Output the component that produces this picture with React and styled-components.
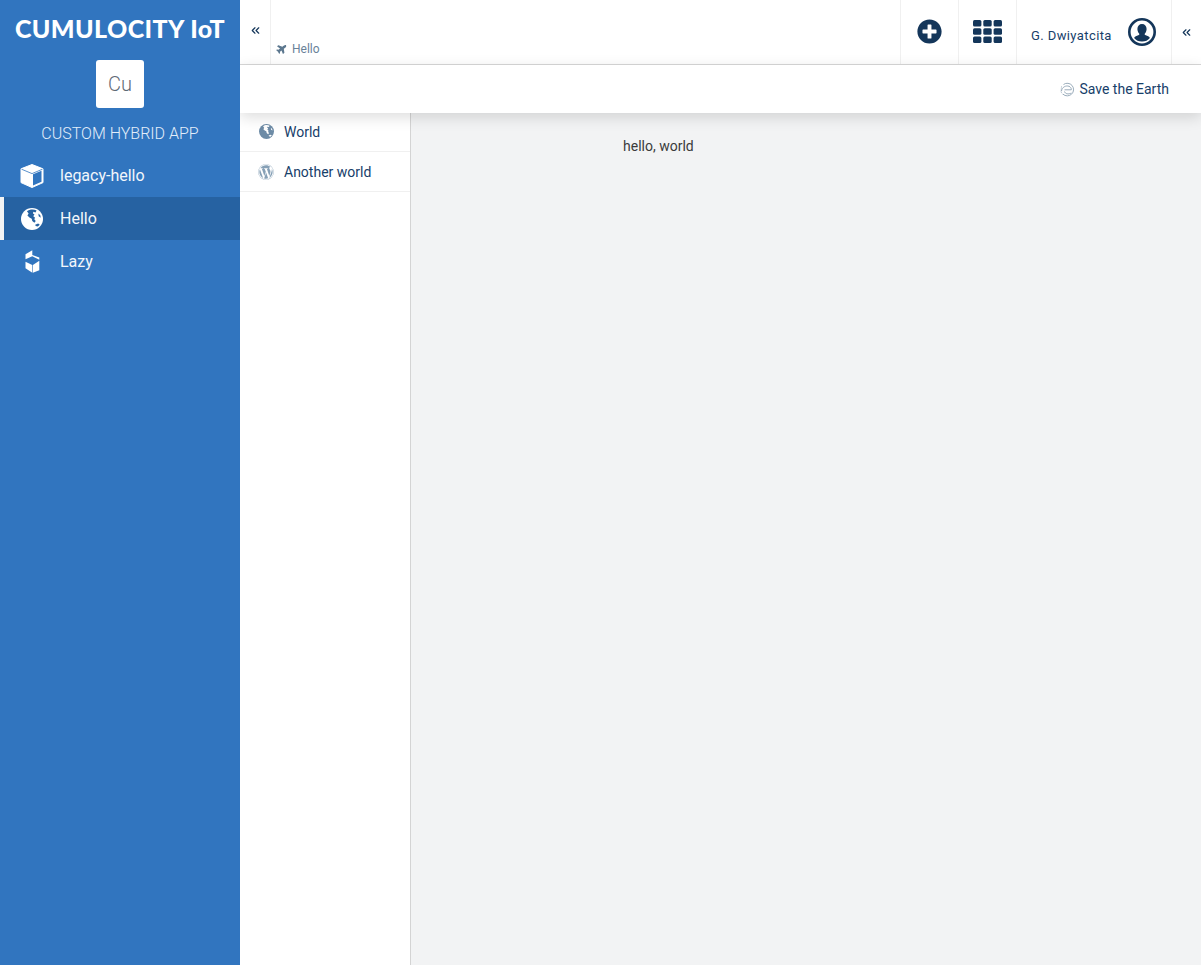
import React from 'react';
import styled, { createGlobalStyle } from 'styled-components';
import { FaWordpress, FaPlane, FaPlusCircle } from 'react-icons/fa';
import { ChevronsLeft } from 'lucide-react';

const Global = createGlobalStyle`
  html, body { margin: 0; padding: 0; height: 100%; }
  body { font-family: Roboto, "Liberation Sans", sans-serif; font-size: 14px; color: #17406a; }
  * { box-sizing: border-box; }
`;

const Page = styled.div`display: flex; height: 965px; width: 1201px; overflow: hidden;`;

const Sidebar = styled.aside`position: relative; z-index: 3; width: 240px; flex: none; background: #3175bf; color: #fff; display: flex; flex-direction: column;`;
const Brand = styled.div`font-family: Lato, sans-serif; font-weight: 900; font-size: 25px; line-height: 30px; text-align: center; padding-top: 13px; letter-spacing: 0.4px; white-space: nowrap;`;
const AppTile = styled.div`width: 48px; height: 48px; margin: 17px auto 0; background: #fff; border-radius: 3px; color: #5f6a75; font-weight: 300; font-size: 20px; display: flex; align-items: center; justify-content: center;`;
const AppName = styled.div`margin-top: 17px; text-align: center; font-weight: 300; font-size: 16px; line-height: 18px; color: #e3eefa; height: 21px;`;
const Nav = styled.nav`margin-top: 8px; display: flex; flex-direction: column;`;
const NavItem = styled.div`
  height: 43px; display: flex; align-items: center; font-size: 16px; color: #f2f6fb; padding-left: ${p => p.$active ? '16px' : '20px'};
  background: ${p => p.$active ? '#2662a2' : 'transparent'};
  border-left: ${p => p.$active ? '4px solid #f2f3f4' : '0'};
`;
const NavIcon = styled.span`width: 24px; height: 24px; margin-right: 16px; display: flex; align-items: center; justify-content: center; color: #fff;`;

const Main = styled.div`flex: 1; min-width: 0; display: flex; flex-direction: column;`;
const Header = styled.header`height: 65px; flex: none; background: #fff; border-bottom: 1px solid #d8d8d8; display: flex; align-items: stretch;`;
const Toggle = styled.div`
  width: 31px; flex: none; color: #14365a; display: flex; justify-content: center; padding-top: 24px;
  border-right: 1px solid #f0f0f0;
`;
const Crumb = styled.div`flex: 1; display: flex; align-items: flex-end; gap: 4px; padding: 0 0 8px 6px; font-size: 12px; line-height: 14px; color: #6a8299;`;
const CrumbIcon = styled.span`display: flex; font-size: 11px; color: #5d788f; padding-bottom: 2px; transform: rotate(-38deg);`;
const HeaderCell = styled.div`
  width: 58px; flex: none; border-left: 1px solid #f0f0f0; display: flex; align-items: center; justify-content: center; color: #14365a; font-size: ${p => p.$size || 14}px; padding: 0 1px 1px 0;
`;
const UserCell = styled.div`width: 155px; flex: none; border-left: 1px solid #f0f0f0; display: flex; align-items: center; padding: 0 15px 1px 14px; justify-content: space-between; font-size: 13px; letter-spacing: 0.4px; color: #17406a;`;
const UserName = styled.span`margin-top: 7px;`;
const EndToggle = styled.div`width: 30px; flex: none; border-left: 1px solid #f0f0f0; color: #14365a; display: flex; justify-content: center; padding-top: 26px;`;

const ActionBar = styled.div`position: relative; z-index: 2; height: 48px; flex: none; background: #fff; box-shadow: 0 4px 14px rgba(0,0,0,0.14); display: flex; align-items: center; justify-content: flex-end; padding: 0 32px 0 0; font-size: 14px; color: #17406a;`;
const ActionIcon = styled.span`display: flex; margin-right: 4px;`;

const Body = styled.div`flex: 1; display: flex; min-height: 0;`;
const SubNav = styled.div`width: 171px; flex: none; margin-top: -1px; background: #fff; border-right: 1px solid #d4d4d4;`;
const SubItem = styled.div`height: 40px; display: flex; align-items: center; padding-left: 18px; border-bottom: 1px solid #f0f0f0; font-size: 14px; color: #17406a;`;
const SubIcon = styled.span`width: 16px; display: flex; justify-content: center; margin-right: 10px; font-size: 16px; color: #86a0b6;`;
const Content = styled.main`flex: 1; background: #f2f3f4; padding: 25px 0 0 212px; font-size: 14px; line-height: 16px; color: #3b3b3b;`;

const CubeIcon = () => (
  <svg width="24" height="24" viewBox="0 0 24 24">
    <path fill="#fff" d="M12 .5 1 4.800V18.600L12 23.500 23 18.600V4.800z" strokeLinejoin="round" stroke="#fff" strokeWidth="1" />
    <path fill="#3175bf" d="M13 10.200 21.500 6.700V17.700L13 21.500z" />
    <path fill="none" stroke="#3175bf" strokeWidth=".8" d="M1.500 5.200 12 9.600 22.500 5.200" />
  </svg>
);

const GlobeIcon = ({ disc, land, size = 22 }) => (
  <svg width={size} height={size} viewBox="0 0 24 24">
    <circle cx="12" cy="12" r="12" fill={disc} />
    <path fill={land} d="M6.500 3.500C9 1.500 14 1 17 2.800l-1.200 2-2.300-.6-.5 1.800 1.700.8-1.300 2.200 1.800 1.400-.6 2.200 1.500 1.700-1.500 1.900-2.300-2-.6-2.500-2.500-1.300L7 8.200l1.300-2.200z" />
    <path fill={land} d="M15.500 18.300l3.200-1.300 1.800 1.200-2.300 2.100-2.200-.7z" />
    <path fill={land} d="M19 6l2 2 .6 2.500-2.300-1.500z" />
  </svg>
);

const HouzzIcon = () => (
  <svg width="15" height="24" viewBox="0 0 15 24" fill="#fff">
    <path d="M.5 4.300 7.300.3V5L14.300 7.500V9.800L7.300 6.300.5 9.300z" />
    <path d="M.5 11.700 7.300 15V22.700L.5 18.300z" />
    <path d="M14.300 10.800V20.300L7.900 22.700V15z" />
  </svg>
);

const GridIcon = () => (
  <svg width="29" height="23" viewBox="0 0 29 23" fill="#14365a">
    {[0, 8.300, 16.600].map(y => [0, 10.300, 20.600].map(x => (
      <rect key={`${x}-${y}`} x={x} y={y} width="8.400" height="6.400" rx="1.500" />
    )))}
  </svg>
);

const EdgeIcon = () => (
  <svg width="15" height="15" viewBox="0 0 15 15" fill="none" stroke="#8fa3b3" strokeWidth=".9">
    <path d="M3.500 2.500A6.300 6.300 0 1 1 3 12.200" />
    <path d="M1.500 9C2 5 6 3.200 9 4.300c1.500.6 2.500 2 2.300 3.500H4.500" />
    <path d="M4.500 9.500c.6 2.400 4 3.200 6.800 1.500" />
    <path d="M1.500 4.500 1 10l2 2.500" strokeDasharray="1 1" />
  </svg>
);

const UserCircle = () => (
  <svg width="28" height="28" viewBox="0 0 28 28">
    <circle cx="14" cy="14" r="12.700" fill="none" stroke="#14365a" strokeWidth="2.600" />
    <path fill="#14365a" d="M14 6c2.800 0 4.600 2.100 4.600 4.900 0 1.900-.8 3.500-1.700 4.500-.4.500-.3 1.200.3 1.500l3 1.400c.9.400 1.400.9 1.700 1.600A10 10 0 0 1 14 23.400a10 10 0 0 1-7.900-3.500c.3-.7.800-1.200 1.700-1.600l3-1.400c.6-.3.700-1 .3-1.500-.9-1-1.700-2.600-1.700-4.500C9.400 8.100 11.200 6 14 6z" />
  </svg>
);

export default function App() {
  return (
    <Page>
      <Global />
      <Sidebar>
        <Brand>CUMULOCITY IoT</Brand>
        <AppTile>Cu</AppTile>
        <AppName>CUSTOM HYBRID APP</AppName>
        <Nav>
          <NavItem><NavIcon><CubeIcon /></NavIcon>legacy-hello</NavItem>
          <NavItem $active><NavIcon><GlobeIcon disc="#fff" land="#2662a2" /></NavIcon>Hello</NavItem>
          <NavItem><NavIcon><HouzzIcon /></NavIcon>Lazy</NavItem>
        </Nav>
      </Sidebar>
      <Main>
        <Header>
          <Toggle><ChevronsLeft size={13} strokeWidth={2.200} /></Toggle>
          <Crumb><CrumbIcon><FaPlane /></CrumbIcon>Hello</Crumb>
          <HeaderCell $size={25}><FaPlusCircle /></HeaderCell>
          <HeaderCell><GridIcon /></HeaderCell>
          <UserCell><UserName>G. Dwiyatcita</UserName><UserCircle /></UserCell>
          <EndToggle><ChevronsLeft size={13} strokeWidth={2.200} /></EndToggle>
        </Header>
        <ActionBar><ActionIcon><EdgeIcon /></ActionIcon>Save the Earth</ActionBar>
        <Body>
          <SubNav>
            <SubItem><SubIcon><GlobeIcon disc="#6d8ba6" land="#ffffff" size={15} /></SubIcon>World</SubItem>
            <SubItem><SubIcon><FaWordpress /></SubIcon>Another world</SubItem>
          </SubNav>
          <Content>hello, world</Content>
        </Body>
      </Main>
    </Page>
  );
}
